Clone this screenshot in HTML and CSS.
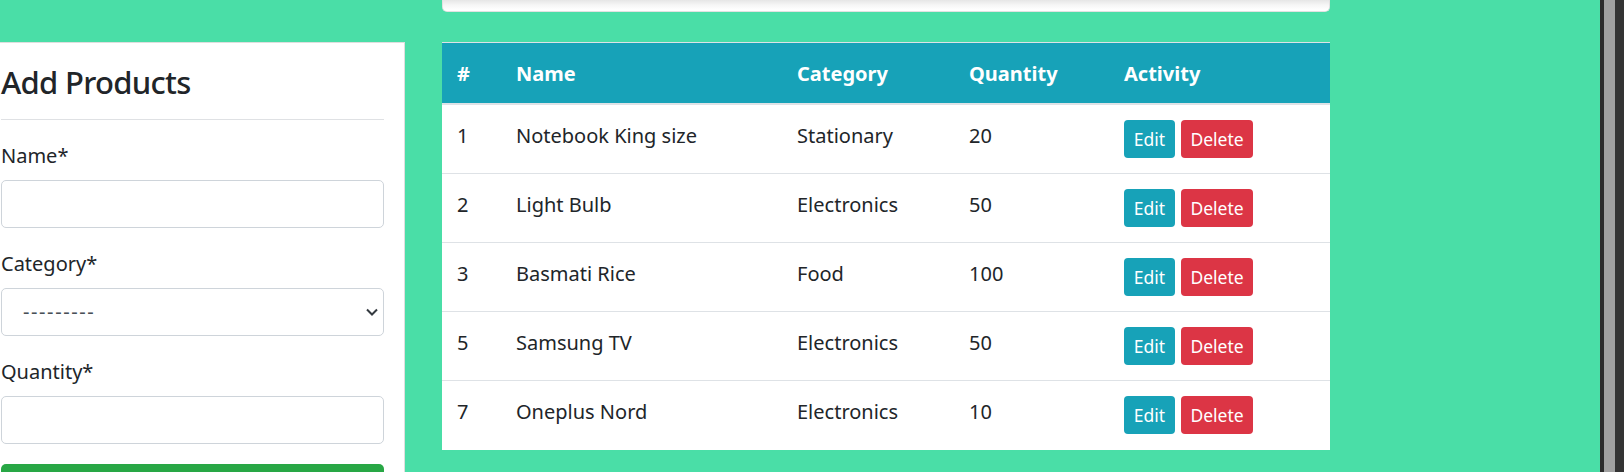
FILE: index.html
```html
<!DOCTYPE html>
<html lang="en">
<head>
<meta charset="utf-8">
<title>Products</title>
<link rel="stylesheet" href="styles.css">
</head>
<body>
<div class="page">
  <aside class="form-col">
    <div class="card">
      <h3 class="card-title">Add Products</h3>
      <hr class="divider">
      <form class="product-form">
        <div class="field">
          <label class="field-label">Name*</label>
          <input class="field-input" type="text">
        </div>
        <div class="field">
          <label class="field-label">Category*</label>
          <div class="field-select">
            <span class="select-value">---------</span>
            <svg class="select-chevron" width="12" height="8" viewBox="0 0 12 8"><polyline points="1,1.5 6,6.5 11,1.5" fill="none" stroke="#343a40" stroke-width="2"/></svg>
          </div>
        </div>
        <div class="field">
          <label class="field-label">Quantity*</label>
          <input class="field-input" type="text">
        </div>
        <button class="btn-submit" type="button"><span class="btn-submit-text">Add Product</span></button>
      </form>
    </div>
  </aside>
  <main class="list-col">
    <div class="top-card"></div>
    <table class="product-table">
      <colgroup>
        <col class="c-id"><col class="c-name"><col class="c-cat"><col class="c-qty"><col class="c-act">
      </colgroup>
      <thead>
        <tr><th>#</th><th>Name</th><th>Category</th><th>Quantity</th><th>Activity</th></tr>
      </thead>
      <tbody>
        <tr><td>1</td><td>Notebook King size</td><td>Stationary</td><td>20</td><td><button class="btn btn-edit">Edit</button><button class="btn btn-delete">Delete</button></td></tr>
        <tr><td>2</td><td>Light Bulb</td><td>Electronics</td><td>50</td><td><button class="btn btn-edit">Edit</button><button class="btn btn-delete">Delete</button></td></tr>
        <tr><td>3</td><td>Basmati Rice</td><td>Food</td><td>100</td><td><button class="btn btn-edit">Edit</button><button class="btn btn-delete">Delete</button></td></tr>
        <tr><td>5</td><td>Samsung TV</td><td>Electronics</td><td>50</td><td><button class="btn btn-edit">Edit</button><button class="btn btn-delete">Delete</button></td></tr>
        <tr><td>7</td><td>Oneplus Nord</td><td>Electronics</td><td>10</td><td><button class="btn btn-edit">Edit</button><button class="btn btn-delete">Delete</button></td></tr>
      </tbody>
    </table>
  </main>
</div>
<div class="window-edge">
  <div class="edge-dark"></div>
  <div class="edge-gray"></div>
  <div class="edge-dark2"></div>
</div>
</body>
</html>
```

FILE: styles.css
```css
* { box-sizing: border-box; }
html, body { height: 100%; }
body {
  margin: 0;
  display: flex;
  overflow: hidden;
  background: #4adea7;
  font-family: "Noto Sans", "Open Sans", sans-serif;
  font-size: 20px;
  line-height: 30px;
  color: #212529;
}
.page {
  flex: 1;
  display: flex;
  align-items: flex-start;
  gap: 37px;
  min-width: 0;
}
.form-col { flex: none; }
.card {
  margin-top: 42px;
  margin-left: -20px;
  width: 425px;
  height: 460px;
  background: #fff;
  border: 1px solid rgba(0,0,0,.13);
  padding: 18px 20px 20px 20px;
}
.card-title {
  margin: 0 0 16px 0;
  font-size: 31px;
  line-height: 42px;
  font-weight: 500;
  letter-spacing: -0.7px;
  color: #212529;
}
.divider {
  margin: 0 0 20px 0;
  border: 0;
  border-top: 1px solid #dfe1e4;
  height: 0;
}
.product-form { display: flex; flex-direction: column; }
.field { display: flex; flex-direction: column; margin-bottom: 20px; }
.field-label { margin-bottom: 9px; padding-top: 1px; line-height: 30px; }
.field-input {
  height: 48px;
  border: 1px solid #ced4da;
  border-radius: 5px;
  background: #fff;
  font: inherit;
}
.field-select {
  height: 48px;
  border: 1px solid #ced4da;
  border-radius: 5px;
  background: #fff;
  display: flex;
  align-items: center;
  justify-content: space-between;
  padding: 0 5px 0 21px;
  color: #495057;
}
.select-value { letter-spacing: 1.6px; }
.btn-submit {
  height: 48px;
  padding: 16px 0 0 0;
  border: 0;
  border-radius: 5px;
  background: #28a745;
  color: #fff;
  font: inherit;
  display: flex;
  justify-content: center;
  align-items: flex-start;
}
.btn-submit-text { display: block; line-height: 30px; }
.list-col {
  flex: none;
  width: 888px;
  display: flex;
  flex-direction: column;
}
.top-card {
  height: 12px;
  margin-bottom: 30px;
  background: linear-gradient(180deg, #e6e6e6 0px, #f6f6f6 5px, #fff 10px);
  border: 1px solid #e2e2e2;
  border-top: 0;
  border-radius: 0 0 5px 5px;
}
.product-table {
  width: 888px;
  border-collapse: collapse;
  table-layout: fixed;
  background: #fff;
}
.c-id { width: 59px; }
.c-name { width: 281px; }
.c-cat { width: 172px; }
.c-qty { width: 155px; }
.c-act { width: 221px; }
.product-table thead tr { background: #17a2b8; }
.product-table th {
  padding: 16px 15px 14px 15px;
  text-align: left;
  font-weight: 700;
  color: #fff;
  border-top: 1px solid #dee2e6;
  border-bottom: 2px solid #dee2e6;
  vertical-align: bottom;
}
.product-table td {
  padding: 16px 15px 14px 15px;
  vertical-align: top;
  border-top: 1px solid #dee2e6;
  height: 69px;
}
.product-table td:last-child { padding-top: 15px; padding-bottom: 15px; }
.product-table tbody tr:first-child td { border-top: 0; }
.btn {
  display: inline-block;
  height: 38px;
  padding: 0;
  border: 0;
  border-radius: 4px;
  color: #fff;
  font-family: inherit;
  font-size: 17.5px;
  line-height: 38px;
  text-align: center;
  vertical-align: top;
}
.btn-edit { width: 51px; background: #17a2b8; margin-right: 6px; }
.btn-delete { width: 72px; background: #dc3545; }
.window-edge { flex: none; width: 24px; display: flex; }
.edge-dark { width: 4px; background: #2b2b2b; }
.edge-gray { width: 11px; background: #a0a0a0; }
.edge-dark2 { width: 9px; background: #333; }
```
